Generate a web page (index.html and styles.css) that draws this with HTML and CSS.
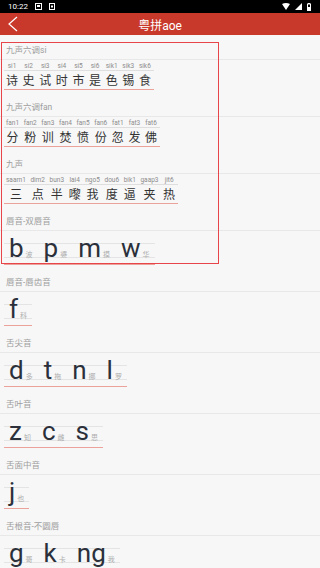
FILE: index.html
```html
<!DOCTYPE html>
<html lang="zh">
<head>
  <meta charset="UTF-8" />
  <meta name="viewport" content="width=device-width, initial-scale=1" />
  <title>粤拼aoe</title>
  <link rel="stylesheet" href="styles.css">
</head>
<body>
  <div class="status">
    <span class="time">10:22</span>
    <svg class="note" width="7" height="7" viewBox="0 0 7 7"><rect x="0.5" y="0.5" width="6" height="6" fill="none" stroke="#fff"/><rect x="2" y="2" width="3" height="2" fill="#fff"/></svg>
    <svg class="note" width="6" height="7" viewBox="0 0 6 7"><rect x="0.5" y="0.5" width="5" height="6" fill="none" stroke="#fff"/><rect x="2" y="2.5" width="2" height="2" fill="#fff"/></svg>
    <span class="grow"></span>
    <svg width="8" height="7" viewBox="0 0 8 7"><path d="M0 1 Q4 -1 8 1 L4 7 Z" fill="#fff"/></svg>
    <svg width="7" height="7" viewBox="0 0 7 7"><path d="M0 7 L7 0 L7 7 Z" fill="#fff"/></svg>
    <svg width="4" height="8" viewBox="0 0 4 8"><rect x="0.5" y="1" width="3" height="6.5" fill="none" stroke="#fff"/><rect x="1" y="0" width="2" height="1" fill="#fff"/><rect x="1" y="4" width="2" height="3" fill="#fff"/></svg>
  </div>

  <header class="bar">
    <svg class="back" width="12" height="16" viewBox="0 0 12 16"><polyline points="10,1 2,8 10,15" fill="none" stroke="#fff" stroke-width="1.2"/></svg>
    <h1>粤拼aoe</h1>
  </header>

  <main class="list">
    <section class="group">
      <h2 class="group-title">九声六调si</h2>
      <div class="group-body">
        <div class="tones">
          <div class="tone"><span class="py">si1</span><span class="hz">诗</span></div>
          <div class="tone"><span class="py">si2</span><span class="hz">史</span></div>
          <div class="tone"><span class="py">si3</span><span class="hz">试</span></div>
          <div class="tone"><span class="py">si4</span><span class="hz">时</span></div>
          <div class="tone"><span class="py">si5</span><span class="hz">市</span></div>
          <div class="tone"><span class="py">si6</span><span class="hz">是</span></div>
          <div class="tone"><span class="py">sik1</span><span class="hz">色</span></div>
          <div class="tone"><span class="py">sik3</span><span class="hz">锡</span></div>
          <div class="tone"><span class="py">sik6</span><span class="hz">食</span></div>
        </div>
      </div>
    </section>

    <section class="group">
      <h2 class="group-title">九声六调fan</h2>
      <div class="group-body">
        <div class="tones">
          <div class="tone"><span class="py">fan1</span><span class="hz">分</span></div>
          <div class="tone"><span class="py">fan2</span><span class="hz">粉</span></div>
          <div class="tone"><span class="py">fan3</span><span class="hz">训</span></div>
          <div class="tone"><span class="py">fan4</span><span class="hz">焚</span></div>
          <div class="tone"><span class="py">fan5</span><span class="hz">愤</span></div>
          <div class="tone"><span class="py">fan6</span><span class="hz">份</span></div>
          <div class="tone"><span class="py">fat1</span><span class="hz">忽</span></div>
          <div class="tone"><span class="py">fat3</span><span class="hz">发</span></div>
          <div class="tone"><span class="py">fat6</span><span class="hz">佛</span></div>
        </div>
      </div>
    </section>

    <section class="group">
      <h2 class="group-title">九声</h2>
      <div class="group-body">
        <div class="tones">
          <div class="tone"><span class="py">saam1</span><span class="hz">三</span></div>
          <div class="tone"><span class="py">dim2</span><span class="hz">点</span></div>
          <div class="tone"><span class="py">bun3</span><span class="hz">半</span></div>
          <div class="tone"><span class="py">lai4</span><span class="hz">嚟</span></div>
          <div class="tone"><span class="py">ngo5</span><span class="hz">我</span></div>
          <div class="tone"><span class="py">dou6</span><span class="hz">度</span></div>
          <div class="tone"><span class="py">bik1</span><span class="hz">逼</span></div>
          <div class="tone"><span class="py">gaap3</span><span class="hz">夹</span></div>
          <div class="tone"><span class="py">jit6</span><span class="hz">热</span></div>
        </div>
      </div>
    </section>

    <section class="group">
      <h2 class="group-title">唇音-双唇音</h2>
      <div class="group-body initials">
        <div class="letters">
          <div class="grid">
            <span class="cell"><span class="ltr">b</span><span class="ex">波</span></span>
            <span class="cell"><span class="ltr">p</span><span class="ex">婆</span></span>
            <span class="cell"><span class="ltr">m</span><span class="ex">摸</span></span>
            <span class="cell"><span class="ltr">w</span><span class="ex">华</span></span>
          </div>
        </div>
      </div>
    </section>

    <section class="group">
      <h2 class="group-title">唇音-唇齿音</h2>
      <div class="group-body initials">
        <div class="letters">
          <div class="grid">
            <span class="cell"><span class="ltr">f</span><span class="ex">科</span></span>
          </div>
        </div>
      </div>
    </section>

    <section class="group">
      <h2 class="group-title">舌尖音</h2>
      <div class="group-body initials">
        <div class="letters">
          <div class="grid">
            <span class="cell"><span class="ltr">d</span><span class="ex">多</span></span>
            <span class="cell"><span class="ltr">t</span><span class="ex">拖</span></span>
            <span class="cell"><span class="ltr">n</span><span class="ex">挪</span></span>
            <span class="cell"><span class="ltr">l</span><span class="ex">罗</span></span>
          </div>
        </div>
      </div>
    </section>

    <section class="group">
      <h2 class="group-title">舌叶音</h2>
      <div class="group-body initials">
        <div class="letters">
          <div class="grid">
            <span class="cell"><span class="ltr">z</span><span class="ex">知</span></span>
            <span class="cell"><span class="ltr">c</span><span class="ex">雌</span></span>
            <span class="cell"><span class="ltr">s</span><span class="ex">思</span></span>
          </div>
        </div>
      </div>
    </section>

    <section class="group">
      <h2 class="group-title">舌面中音</h2>
      <div class="group-body initials">
        <div class="letters">
          <div class="grid">
            <span class="cell"><span class="ltr">j</span><span class="ex">也</span></span>
          </div>
        </div>
      </div>
    </section>

    <section class="group">
      <h2 class="group-title">舌根音-不圆唇</h2>
      <div class="group-body initials">
        <div class="letters">
          <div class="grid">
            <span class="cell"><span class="ltr">g</span><span class="ex">哥</span></span>
            <span class="cell"><span class="ltr">k</span><span class="ex">卡</span></span>
            <span class="cell"><span class="ltr">ng</span><span class="ex">我</span></span>
          </div>
        </div>
      </div>
    </section>

    <div class="mark"></div>
  </main>
</body>
</html>
```

FILE: styles.css
```css
body {
  margin: 0;
  padding: 0;
  width: 320px;
  height: 568px;
  overflow: hidden;
  background: #f7f7f7;
  font-family: Roboto, "Noto Sans CJK SC", sans-serif;
}

.status {
  height: 13px;
  background: #000;
  display: flex;
  align-items: center;
  gap: 5px;
  padding: 0 9px 0 8px;
  color: #fff;
}
.status .time {
  font-size: 8px;
  margin-right: 2px;
}
.status .note {
  margin-right: 2px;
}
.status .grow {
  flex: 1;
}

.bar {
  height: 22px;
  background: #c8392b;
  position: relative;
  display: flex;
  align-items: center;
  justify-content: center;
}
.bar .back {
  position: absolute;
  left: 7px;
  top: 3px;
}
.bar h1 {
  margin: 0;
  font-size: 12px;
  font-weight: normal;
  color: #fff;
}

.list {
  position: relative;
  padding-top: 1px;
}

.group-title {
  margin: 0;
  padding: 9px 6px 4px;
  line-height: 10px;
  font-size: 8.5px;
  font-weight: normal;
  color: #9e9e9e;
  border-bottom: 1px solid #e8e8e8;
}

.group-body {
  padding: 2px 0 3px 4px;
}

/* cantonese tone rows */
.tones {
  display: flex;
  width: fit-content;
  gap: 4.6px;
  padding: 0 3px 0 2px;
  border-bottom: 1px solid #eba29b;
  background-image: linear-gradient(#dedede, #dedede);
  background-size: 100% 1px;
  background-position: 0 8px;
  background-repeat: no-repeat;
}
.tone {
  display: flex;
  flex-direction: column;
  align-items: center;
  min-width: 12px;
}
.tone .py {
  font-size: 6.5px;
  line-height: 9px;
  color: #8c8c8c;
}
.tone .hz {
  font-family: "Noto Sans CJK SC", sans-serif;
  font-size: 12px;
  line-height: 18px;
  color: #333;
}

/* initials rows */
.initials {
  padding-top: 12px;
}
.letters {
  width: fit-content;
  padding-bottom: 6px;
  border-bottom: 1px solid #eba29b;
}
.grid {
  display: flex;
  align-items: flex-start;
  gap: 11px;
  height: 13px;
  padding: 0 5px;
  border-top: 1px solid #e4e4e4;
  border-bottom: 1px solid #e4e4e4;
}
.cell {
  display: flex;
  align-items: baseline;
}
.ltr {
  font-family: Roboto, sans-serif;
  font-size: 26px;
  line-height: 9px;
  color: #2b303b;
}
.ex {
  font-family: "Noto Sans CJK SC", sans-serif;
  font-size: 7px;
  line-height: 9px;
  color: #adadad;
  margin-left: 2px;
}

.mark {
  position: absolute;
  left: 1px;
  top: 7px;
  width: 218px;
  height: 222px;
  border: 1.5px solid #e8454b;
  box-sizing: border-box;
}
```
